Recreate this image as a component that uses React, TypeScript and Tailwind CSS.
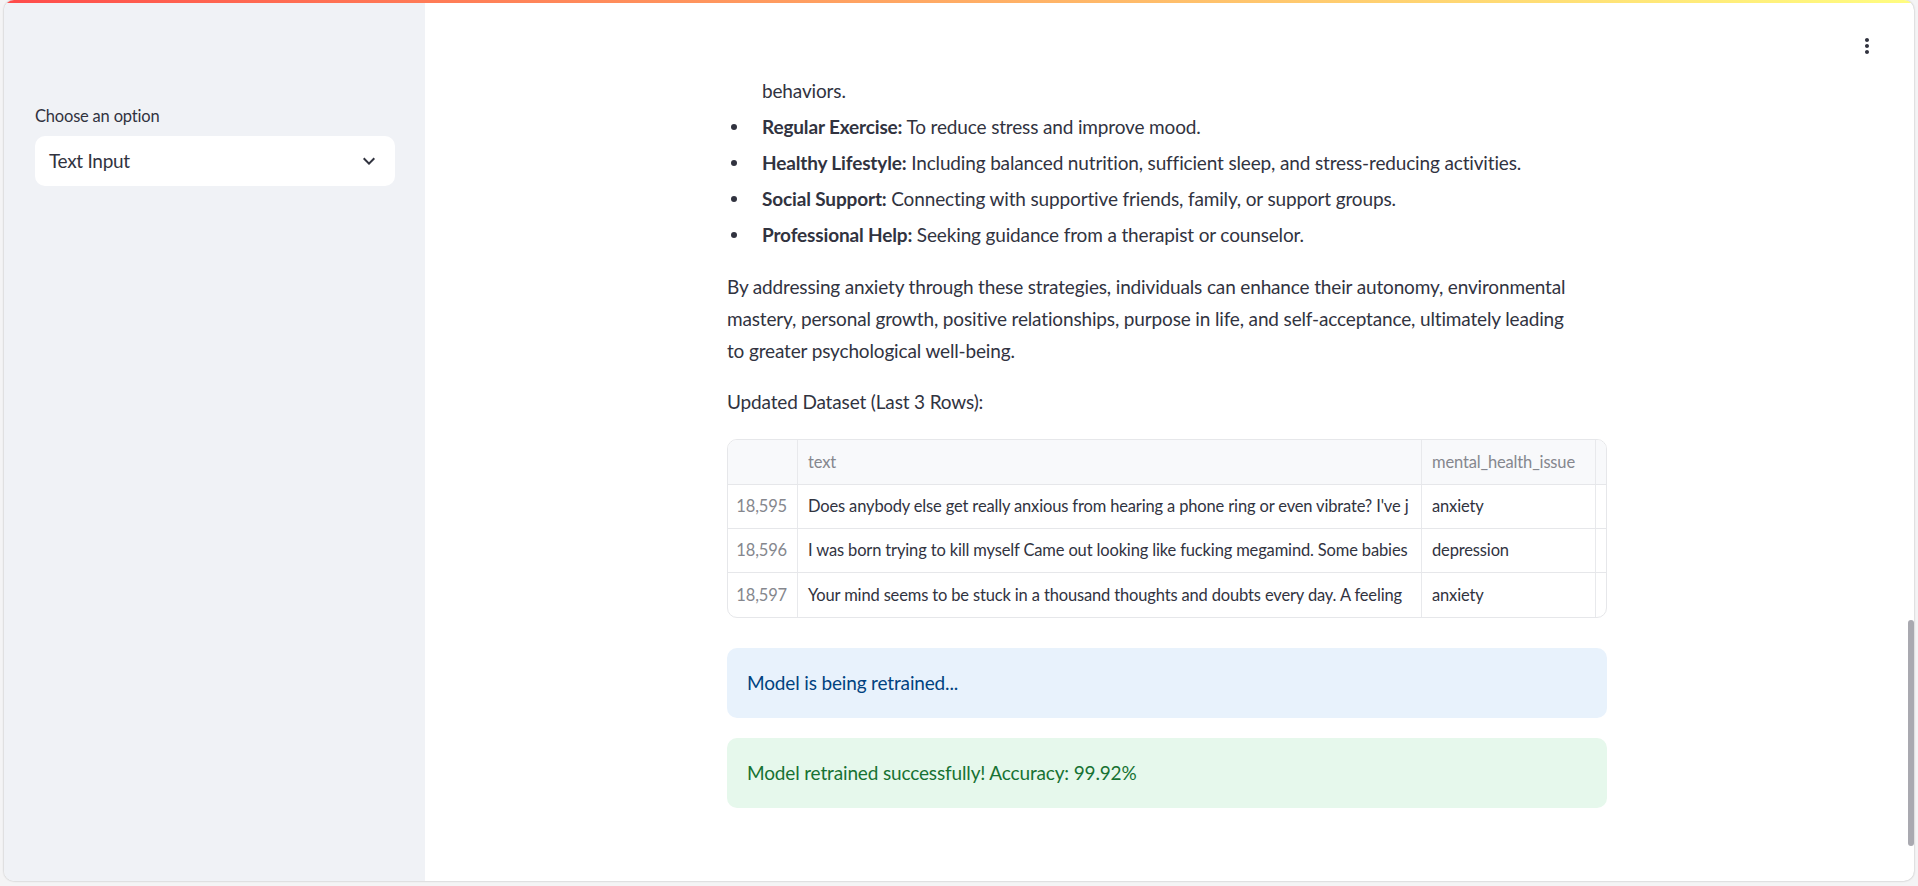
const font = { fontFamily: "Lato, 'Noto Sans', sans-serif" };

const bullets = [
  ["Regular Exercise:", "To reduce stress and improve mood."],
  ["Healthy Lifestyle:", "Including balanced nutrition, sufficient sleep, and stress-reducing activities."],
  ["Social Support:", "Connecting with supportive friends, family, or support groups."],
  ["Professional Help:", "Seeking guidance from a therapist or counselor."],
];

// text column is clipped in the grid, keep what is visible
const rows = [
  ["18,595", "Does anybody else get really anxious from hearing a phone ring or even vibrate? I've j", "anxiety"],
  ["18,596", "I was born trying to kill myself Came out looking like fucking megamind. Some babies", "depression"],
  ["18,597", "Your mind seems to be stuck in a thousand thoughts and doubts every day. A feeling", "anxiety"],
];

function Sidebar() {
  return (
    <aside className="w-[421px] shrink-0 bg-[#f0f2f6] pl-[31px] pr-[30px] pt-[102px]">
      <label className="block text-[16.5px] leading-[22px] tracking-[-0.2px] text-[#31333f]">Choose an option</label>
      <div className="mt-[9px] flex h-[50px] items-center justify-between rounded-[10px] bg-white pl-[14px] pr-[14px]">
        <span className="text-[19px] tracking-[-0.3px] text-[#31333f]">Text Input</span>
        <svg width="24" height="24" viewBox="0 0 24 24" fill="#31333f">
          <path d="M7.41 8.59L12 13.17l4.59-4.58L18 10l-6 6-6-6 1.41-1.41z" />
        </svg>
      </div>
    </aside>
  );
}

function DataTable() {
  const cell = "flex items-center overflow-hidden whitespace-nowrap border-r border-[#e8e9ec] px-[10px]";
  return (
    <div className="mt-[21px] overflow-hidden rounded-[10px] border border-[#e6e7ea] text-[16.5px] tracking-[-0.15px]">
      <div className="grid h-[45px] grid-cols-[70px_624px_174px_1fr] border-b border-[#e6e7ea] bg-[#f8f9fb] text-[#85878e]">
        <div className={cell} />
        <div className={cell}>text</div>
        <div className={cell}>mental_health_issue</div>
        <div />
      </div>
      {rows.map((r, i) => (
        <div
          key={r[0]}
          className={`grid h-[44px] grid-cols-[70px_624px_174px_1fr] text-[#31333f] ${i < 2 ? "border-b border-[#e6e7ea]" : ""}`}
        >
          <div className={`${cell} justify-end text-[#85878e]`}>{r[0]}</div>
          <div className={cell}>{r[1]}</div>
          <div className={cell}>{r[2]}</div>
          <div />
        </div>
      ))}
    </div>
  );
}

export default function App() {
  return (
    <div className="h-[886px] w-full overflow-hidden bg-[#f4f4f5] px-[4px] pb-[5px]" style={font}>
      <div className="relative flex h-[881px] flex-col overflow-hidden rounded-[10px] bg-white shadow-[0_0_2px_rgba(0,0,0,0.3)]">
        {/* decoration bar */}
        <div className="h-[3px] shrink-0 bg-gradient-to-r from-[#ff4b4b] to-[#fffd80]" />
        <div className="flex flex-1">
          <Sidebar />
          <main className="flex-1 pt-[72px] text-[19px] tracking-[-0.15px] text-[#31333f]">
            <div className="ml-[302px] w-[880px]">
              <div className="h-[32px] pl-[35px] leading-[32px]">behaviors.</div>
              <ul>
                {bullets.map(([b, t]) => (
                  <li key={b} className="mt-[4px] flex h-[32px] items-center leading-[32px]">
                    <span className="ml-[4px] mr-[25px] h-[6px] w-[6px] shrink-0 rounded-full bg-[#31333f]" />
                    <span>
                      <strong className="font-bold">{b}</strong> {t}
                    </span>
                  </li>
                ))}
              </ul>
              <p className="mt-[20px] whitespace-nowrap leading-[32px]">
                By addressing anxiety through these strategies, individuals can enhance their autonomy, environmental
                <br />
                mastery, personal growth, positive relationships, purpose in life, and self-acceptance, ultimately leading
                <br />
                to greater psychological well-being.
              </p>
              <p className="mt-[19px] leading-[32px]">Updated Dataset (Last 3 Rows):</p>
              <DataTable />
              <div className="mt-[30px] flex h-[70px] items-center rounded-[10px] bg-[#e8f2fc] px-[20px] text-[#004280]">
                Model is being retrained...
              </div>
              <div className="mt-[20px] flex h-[70px] items-center rounded-[10px] bg-[#e6f8ec] px-[20px] text-[#177233]">
                Model retrained successfully! Accuracy: 99.92%
              </div>
            </div>
          </main>
        </div>
        {/* main menu */}
        <button className="absolute right-[35px] top-[34px]">
          <svg width="24" height="24" viewBox="0 0 24 24" fill="#31333f">
            <path d="M12 8c1.1 0 2-.9 2-2s-.9-2-2-2-2 .9-2 2 .9 2 2 2zm0 2c-1.1 0-2 .9-2 2s.9 2 2 2 2-.9 2-2-.9-2-2-2zm0 6c-1.1 0-2 .9-2 2s.9 2 2 2 2-.9 2-2-.9-2-2-2z" />
          </svg>
        </button>
        {/* scrollbar thumb */}
        <div className="absolute right-0 top-[620px] h-[226px] w-[6px] rounded-full bg-[#a9a9b0]" />
      </div>
    </div>
  );
}
